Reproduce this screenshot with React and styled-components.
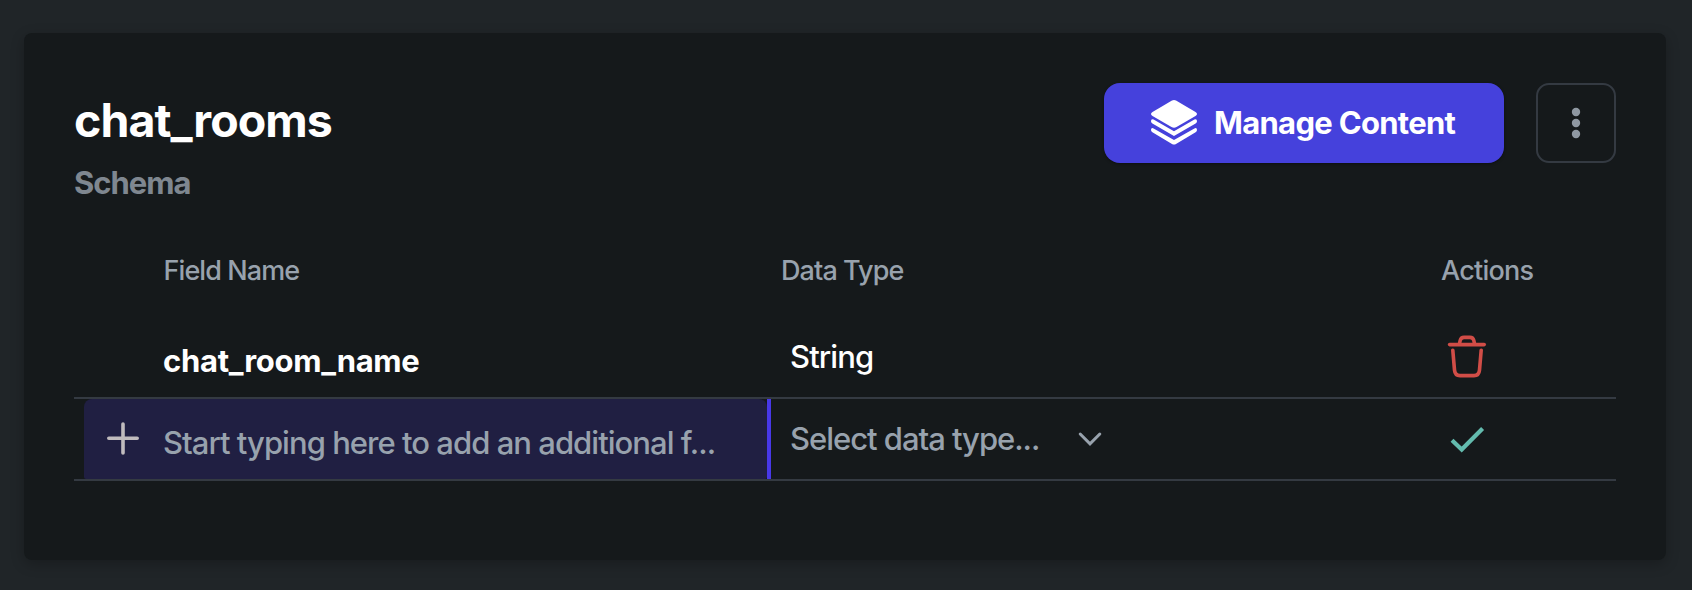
import React from "react";
import styled, { createGlobalStyle } from "styled-components";

const GlobalStyle = createGlobalStyle`
  *, *::before, *::after { box-sizing: border-box; }
  body {
    margin: 0;
    background: #202528;
    font-family: Inter, "Liberation Sans", sans-serif;
    overflow: hidden;
  }
`;

const Page = styled.main`
  height: 590px;
  padding: 33px 26px 30px 24px;
`;

const Card = styled.section`
  height: 527px;
  padding: 50px;
  border-radius: 8px;
  background: #15191b;
  box-shadow: 0 4px 14px rgba(0, 0, 0, 0.24);
`;

const CardHeader = styled.header`
  display: flex;
  justify-content: space-between;
  align-items: flex-start;
  height: 140px;
`;

const Titles = styled.div`
  padding-top: 9px;
`;

const Title = styled.h1`
  margin: 0 0 15px;
  color: #fff;
  font-size: 46.5px;
  font-weight: 750;
  line-height: 56px;
  letter-spacing: -0.95px;
`;

const Subtitle = styled.h2`
  margin: 0;
  color: #7f8790;
  font-size: 31px;
  font-weight: 700;
  line-height: 40px;
  letter-spacing: -1.02px;
`;

const Toolbar = styled.div`
  display: flex;
  gap: 32px;
`;

const PrimaryButton = styled.button`
  display: flex;
  align-items: center;
  width: 400px;
  height: 80px;
  padding: 0 0 0 46px;
  gap: 16px;
  border: 0;
  border-radius: 16px;
  background: #4541dc;
  color: #fff;
  font: 700 31px/40px Inter, sans-serif;
  letter-spacing: -0.7px;
  white-space: nowrap;
  box-shadow: 0 1px 3px rgba(0, 0, 0, 0.4);
`;

const MenuButton = styled.button`
  display: grid;
  place-items: center;
  width: 80px;
  height: 80px;
  padding: 0;
  border: 2px solid #343a42;
  border-radius: 13px;
  background: transparent;
`;

const Row = styled.div`
  display: grid;
  grid-template-columns: 697px 670px 175px;
  height: 82px;
  border-bottom: 2px solid #343a42;
`;

const HeadRow = styled(Row)`
  align-items: center;
  height: 94px;
  padding-top: 2px;
  border-bottom: 0;
`;

const HeadCell = styled.div`
  padding-left: ${(p) => p.$inset || 0}px;
  color: #98a2ad;
  font-size: 27px;
  font-weight: 450;
  line-height: 40px;
  letter-spacing: ${(p) => p.$tracking || -0.92}px;
`;

const NameCell = styled.div`
  display: flex;
  padding-left: 10px;
  border-right: 4px solid ${(p) => (p.$active ? "#4838e8" : "transparent")};
`;

const NameField = styled.div`
  display: flex;
  flex: 1;
  align-items: center;
  gap: 24px;
  padding-left: 23px;
  border-radius: 8px 8px 2px 2px;
  background: ${(p) => (p.$active ? "#201f42" : "transparent")};
`;

const IconSlot = styled.span`
  display: flex;
  width: 32px;
`;

const FieldText = styled.span`
  padding-top: 8px;
  color: ${(p) => (p.$placeholder ? "#98a2ad" : "#fff")};
  font-size: 31px;
  font-weight: ${(p) => (p.$placeholder ? 450 : 700)};
  line-height: 40px;
  letter-spacing: ${(p) => (p.$placeholder ? -0.97 : -0.3)}px;
  white-space: nowrap;
`;

const TypeCell = styled.div`
  display: flex;
  align-items: center;
  gap: 39px;
  padding-left: 19px;
  color: ${(p) => (p.$placeholder ? "#98a2ad" : "#fff")};
  font-size: 31px;
  font-weight: ${(p) => (p.$placeholder ? 450 : 500)};
  line-height: 40px;
  letter-spacing: ${(p) => (p.$placeholder ? -1.03 : -0.9)}px;
`;

const ActionCell = styled.div`
  display: flex;
  align-items: center;
  padding: 0 0 ${(p) => p.$lift || 0}px 6px;
`;

const LayersIcon = () => (
  <svg width="48" height="48" viewBox="0 0 48 48" fill="#fff">
    <path d="M22 1.5Q24 .4 26 1.5L45.5 13Q48.5 15 45.5 17L26.5 28Q24 29.3 21.5 28L2.5 17Q-.5 15 2.5 13Z" />
    <path d="M1 22.2Q1 19.6 3.6 20.6L24 32.2L44.4 20.6Q47 19.6 47 22.2Q47 23.6 45.6 24.5L24 37L2.4 24.5Q1 23.6 1 22.2Z" />
    <path d="M1 31Q1 28.4 3.6 29.4L24 41L44.4 29.4Q47 28.4 47 31Q47 32.4 45.6 33.3L26 45Q24 46 22 45L2.4 33.3Q1 32.4 1 31Z" />
  </svg>
);

const DotsIcon = () => (
  <svg width="10" height="32" viewBox="0 0 10 32" fill="#8f98a2">
    <circle cx="5" cy="5" r="4.2" />
    <circle cx="5" cy="16" r="4.2" />
    <circle cx="5" cy="27" r="4.2" />
  </svg>
);

const PlusIcon = () => (
  <svg width="32" height="34" viewBox="0 0 32 34" stroke="#c0bbbd" strokeWidth="3.6" strokeLinecap="round">
    <path d="M16 2V31M1.8 16.2H30.2" />
  </svg>
);

const ChevronIcon = () => (
  <svg width="24" height="16" viewBox="0 0 24 16" fill="none" stroke="#98a2ad" strokeWidth="3" strokeLinecap="round">
    <path d="M2.2 3L12 12.8L21.8 3" />
  </svg>
);

const TrashIcon = () => (
  <svg width="40" height="44" viewBox="0 0 40 44" fill="none" stroke="#d14d47" strokeWidth="3.6" strokeLinecap="round" strokeLinejoin="round">
    <path d="M2.6 10.6H37.2" />
    <path d="M12.4 10.2L13.2 6.4Q14 3.4 17 3.4H23Q26 3.4 26.8 6.4L27.6 10.2" />
    <path d="M5.8 16.2L7.5 36Q8 41.6 13 41.6H27Q32 41.6 32.5 36L34.2 16.2" />
  </svg>
);

const CheckIcon = () => (
  <svg width="40" height="28" viewBox="0 0 40 28" fill="none" stroke="#63bbae" strokeWidth="4.2">
    <path d="M5 15.3L14.7 24.5L35.6 3.6" />
  </svg>
);

export default function App() {
  return (
    <>
      <GlobalStyle />
      <Page>
        <Card>
          <CardHeader>
            <Titles>
              <Title>chat_rooms</Title>
              <Subtitle>Schema</Subtitle>
            </Titles>
            <Toolbar>
              <PrimaryButton>
                <LayersIcon />
                Manage Content
              </PrimaryButton>
              <MenuButton aria-label="More options">
                <DotsIcon />
              </MenuButton>
            </Toolbar>
          </CardHeader>

          <HeadRow>
            <HeadCell $inset={89.5}>Field Name</HeadCell>
            <HeadCell $inset={10}>Data Type</HeadCell>
            <HeadCell $tracking={-0.75}>Actions</HeadCell>
          </HeadRow>

          <Row>
            <NameCell>
              <NameField>
                <IconSlot />
                <FieldText>chat_room_name</FieldText>
              </NameField>
            </NameCell>
            <TypeCell>String</TypeCell>
            <ActionCell $lift={2}>
              <TrashIcon />
            </ActionCell>
          </Row>

          <Row>
            <NameCell $active>
              <NameField $active>
                <IconSlot>
                  <PlusIcon />
                </IconSlot>
                <FieldText $placeholder>Start typing here to add an additional f...</FieldText>
              </NameField>
            </NameCell>
            <TypeCell $placeholder>
              Select data type...
              <ChevronIcon />
            </TypeCell>
            <ActionCell>
              <CheckIcon />
            </ActionCell>
          </Row>
        </Card>
      </Page>
    </>
  );
}
